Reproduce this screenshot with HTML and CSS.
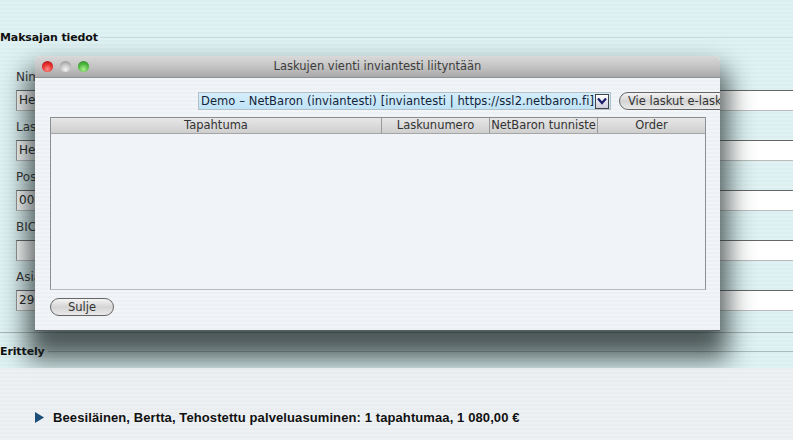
FILE: index.html
```html
<!DOCTYPE html>
<html lang="fi">
<head>
<meta charset="UTF-8">
<title>Laskujen vienti</title>
<link rel="stylesheet" href="styles.css">
</head>
<body>
<div class="page">
  <div class="upper">
    <div class="legend"><span>Maksajan tiedot</span></div>
    <div class="form">
      <div class="field"><label>Nimi</label><div class="input">Heikki</div></div>
      <div class="field"><label>Laskutusnimi</label><div class="input">Heikki</div></div>
      <div class="field"><label>Postinumero</label><div class="input">00100</div></div>
      <div class="field"><label>BIC</label><div class="input"></div></div>
      <div class="field"><label>Asiakasnumero</label><div class="input">29</div></div>
    </div>
    <div class="legend legend-second"><span>Erittely</span></div>
  </div>

  <div class="lower">
    <div class="summary">
      <svg class="arrow" width="9" height="11" viewBox="0 0 9 11"><path d="M0 0L9 5.5L0 11Z" fill="#1c4f78"/></svg>
      <span>Beesiläinen, Bertta, Tehostettu palveluasuminen: 1 tapahtumaa, 1 080,00 €</span>
    </div>
  </div>

  <div class="window">
    <div class="titlebar">
      <div class="lights">
        <span class="light red"></span>
        <span class="light grey"></span>
        <span class="light green"></span>
      </div>
      <div class="title">Laskujen vienti inviantesti liityntään</div>
    </div>
    <div class="content">
      <div class="toolbar">
        <div class="select">
          <span>Demo – NetBaron (inviantesti) [inviantesti | https://ssl2.netbaron.fi]</span>
          <div class="select-btn">
            <svg width="10" height="8" viewBox="0 0 10 8"><path d="M1 1.5L5 6L9 1.5" fill="none" stroke="#1d1d6b" stroke-width="2.2"/></svg>
          </div>
        </div>
        <div class="pill pill-export">Vie laskut e-laskuina</div>
      </div>
      <div class="table">
        <div class="thead">
          <div class="th th-event">Tapahtuma</div>
          <div class="th th-num">Laskunumero</div>
          <div class="th th-id">NetBaron tunniste</div>
          <div class="th th-order">Order</div>
        </div>
      </div>
      <div class="pill pill-close">Sulje</div>
    </div>
  </div>
</div>
</body>
</html>
```

FILE: styles.css
```css
html, body {
  margin: 0;
  padding: 0;
}
body {
  font-family: "DejaVu Sans", sans-serif;
  font-size: 11px;
  color: #222;
}
.page {
  position: relative;
  width: 793px;
  height: 440px;
  overflow: hidden;
  background: #edf1f4;
}
.upper {
  height: 368px;
  box-sizing: border-box;
  padding-top: 30px;
  background: repeating-linear-gradient(180deg, #dbeff0 0, #dbeff0 2px, #e0f2f3 2px, #e0f2f3 4px);
}
.legend {
  display: flex;
  align-items: center;
  height: 14px;
  font-weight: bold;
  font-size: 11px;
  letter-spacing: -0.12px;
  color: #111;
}
.legend:after {
  content: "";
  flex: 1;
  height: 1px;
  margin-left: 3px;
  background: #c9dbdc;
}
.legend-second {
  margin-top: 11px;
}
.legend-second:after {
  background: #a9bcbd;
}
.form {
  margin-top: 24px;
  padding-left: 16px;
  padding-bottom: 14px;
  border-bottom: 1px solid #a8b6b6;
}
.field {
  height: 50px;
}
.field label {
  display: block;
  height: 16px;
  line-height: 18px;
  margin-bottom: 6px;
  font-size: 12px;
  color: #333;
}
.input {
  box-sizing: border-box;
  height: 21px;
  line-height: 19px;
  padding-left: 2px;
  background: #fff;
  border-top: 1px solid #666;
  border-left: 1px solid #999;
  border-bottom: 1px solid #bbb;
  font-size: 12px;
  color: #222;
}
.lower {
  position: relative;
  z-index: 2;
  height: 72px;
  box-sizing: border-box;
  padding: 41px 0 0 35px;
  background: repeating-linear-gradient(180deg, rgba(233,237,240,.93) 0, rgba(233,237,240,.93) 2px, rgba(238,241,244,.93) 2px, rgba(238,241,244,.93) 4px);
}
.summary {
  display: flex;
  align-items: center;
  gap: 9px;
  height: 16px;
  font-family: "Liberation Sans", Arial, sans-serif;
  font-weight: bold;
  font-size: 13px;
  letter-spacing: 0.1px;
  color: #111;
}
.window {
  position: absolute;
  left: 35px;
  top: 56px;
  z-index: 1;
  width: 685px;
  height: 275px;
  border-radius: 5px 5px 0 0;
  border-bottom: 1px solid #55605e;
  box-sizing: border-box;
  box-shadow: 0 20px 26px 8px rgba(25,35,35,.74);
  background: repeating-linear-gradient(180deg, #edf0f4 0, #edf0f4 2px, #f2f5f8 2px, #f2f5f8 4px);
  font-size: 11.5px;
}
.titlebar {
  position: relative;
  height: 21px;
  border-radius: 5px 5px 0 0;
  background: linear-gradient(180deg, #d9d9d9 0, #c4c4c4 50%, #a9a9a9 100%);
  border-bottom: 1px solid #8f8f8f;
}
.lights {
  display: flex;
  gap: 7px;
  padding: 5px 0 0 7px;
}
.light {
  width: 11px;
  height: 11px;
  border-radius: 50%;
}
.red {
  background: radial-gradient(circle at 50% 75%, #ff8f89 0, #e8302c 50%, #9a1216 100%);
}
.grey {
  background: radial-gradient(circle at 50% 75%, #f2f2f2 0, #c4c4c4 50%, #858585 100%);
}
.green {
  background: radial-gradient(circle at 50% 75%, #aff092 0, #50bb40 50%, #257a22 100%);
}
.title {
  position: absolute;
  left: 0;
  right: 0;
  top: 3px;
  text-align: center;
  color: #3c3c3c;
}
.content {
  height: 253px;
  overflow: hidden;
}
.toolbar {
  display: flex;
  align-items: center;
  gap: 8px;
  height: 18px;
  margin: 14px 0 7px 163px;
  overflow: hidden;
}
.select {
  flex: none;
  box-sizing: border-box;
  display: flex;
  align-items: center;
  width: 413px;
  height: 18px;
  padding: 0 1px 0 2px;
  border: 1px solid #b4c0c8;
  background: linear-gradient(180deg, #d4eefa, #bfe3f6);
  color: #14233a;
}
.select span {
  flex: 1;
  white-space: nowrap;
  letter-spacing: 0.07px;
}
.select-btn {
  display: flex;
  align-items: center;
  justify-content: center;
  width: 14px;
  height: 15px;
  box-sizing: border-box;
  border: 1px solid #444;
  background: linear-gradient(180deg, #fff, #ccd);
}
.pill {
  box-sizing: border-box;
  border: 1px solid #666;
  border-radius: 10px;
  background: linear-gradient(180deg, #f4f4f4 0, #d5d5d5 50%, #e9e9e9 100%);
  text-align: center;
  color: #333;
  white-space: nowrap;
}
.pill-export {
  flex: none;
  width: 140px;
  height: 18px;
  line-height: 16px;
  padding-left: 8px;
  text-align: left;
}
.pill-close {
  width: 64px;
  height: 18px;
  line-height: 16px;
  margin: 8px 0 0 15px;
}
.table {
  box-sizing: border-box;
  width: 656px;
  height: 173px;
  margin-left: 15px;
  border: 1px solid #8b9094;
  border-bottom-color: #b6bbbf;
  background: #f0f4f8;
}
.thead {
  display: flex;
  height: 15px;
  background: linear-gradient(180deg, #e6e6e6 0, #cfcfcf 100%);
  border-bottom: 1px solid #a5a5a5;
}
.th {
  box-sizing: border-box;
  line-height: 15px;
  text-align: center;
  color: #333;
  white-space: nowrap;
  border-right: 1px solid #9a9a9a;
}
.th-event { width: 331px; }
.th-num { width: 108px; }
.th-id { width: 108px; }
.th-order { flex: 1; border-right: 0; }
```
